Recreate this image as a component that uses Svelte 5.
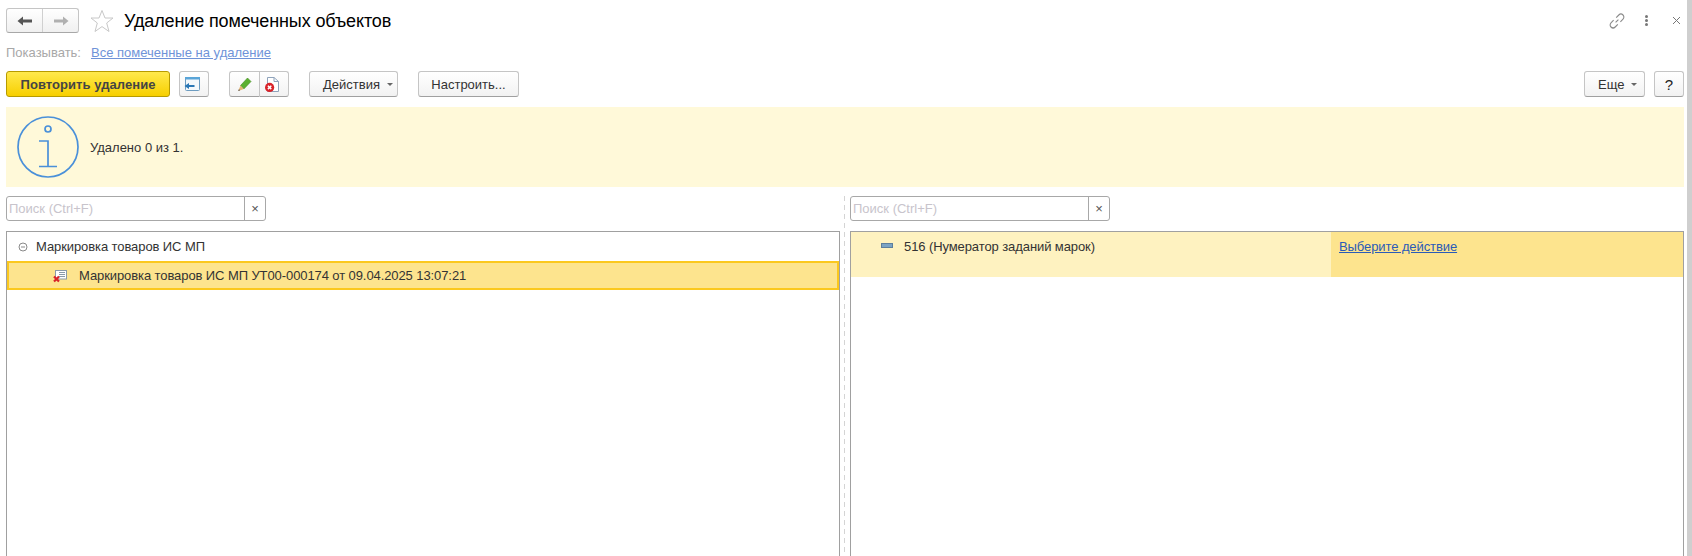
<script lang="ts">
	const searchHint = 'Поиск (Ctrl+F)';
</script>

<div class="page">
	<main class="form">
		<header class="head">
			<div class="nav">
				<button class="nav__btn" aria-label="Назад">
					<svg width="16" height="12" viewBox="0 0 16 12"><path d="M0.5 6 6 1.5V4.5H15V7.5H6V10.5Z" fill="#555" /></svg>
				</button>
				<button class="nav__btn" aria-label="Вперед">
					<svg width="16" height="12" viewBox="0 0 16 12"><path d="M15.5 6 10 1.5V4.5H1V7.5H10V10.5Z" fill="#b0b0b0" /></svg>
				</button>
			</div>
			<svg class="star" width="24" height="24" viewBox="0 0 24 24">
				<path d="M12 1.5 15 9H23L16.7 14 19 22.5 12 17.6 5 22.5 7.3 14 1 9H9Z" fill="#fff" stroke="#c8c8c8" />
			</svg>
			<h1>Удаление помеченных объектов</h1>
			<div class="head__tools">
				<svg width="18" height="18" viewBox="0 0 18 18" fill="none" stroke="#8a8a8a" stroke-width="1.1">
					<path d="M7.6 10.4 10.4 7.6M8.2 5.6 10.8 3a2.9 2.9 0 0 1 4.2 4.2L12.4 9.8M9.8 12.4 7.2 15A2.9 2.9 0 0 1 3 10.8L5.6 8.2" />
				</svg>
				<span class="dots"><i></i><i></i><i></i></span>
				<svg width="9" height="9" viewBox="0 0 9 9" stroke="#777"><path d="M1 1 8 8M8 1 1 8" /></svg>
			</div>
		</header>

		<div class="show">
			<span class="show__label">Показывать:</span>
			<a href="#all" class="show__link">Все помеченные на удаление</a>
		</div>

		<div class="bar">
			<button class="btn btn--main">Повторить удаление</button>
			<button class="btn btn--icon" aria-label="Вернуться">
				<svg width="20" height="18" viewBox="0 0 20 18">
					<rect x="1.5" y="2.5" width="14" height="13" rx="1" fill="#f4f8fb" stroke="#6d9cc0" />
					<path d="M1 2h15v2.5H1z" fill="#5aa5d8" />
					<path d="M0.5 11 5 8V10H10.5V12H5V14Z" fill="#2a77b5" />
				</svg>
			</button>
			<div class="group">
				<button class="btn btn--icon" aria-label="Изменить">
					<svg width="18" height="18" viewBox="0 0 18 18">
						<path d="M4.5 10.5 11.5 3 15 6.5 7.8 14Z" fill="#5cb030" stroke="#3f8a1f" stroke-width=".6" />
						<path d="M4.5 10.5 7.8 14 2.2 16Z" fill="#e5b676" />
						<path d="M2.9 14.2 4.2 15.3 2.2 16Z" fill="#444" />
					</svg>
				</button>
				<button class="btn btn--icon" aria-label="Удалить">
					<svg width="18" height="18" viewBox="0 0 18 18">
						<path d="M2.5 2.5H9L13.5 6.5V16.5H2.5Z" fill="#fff" stroke="#8fa3bb" />
						<path d="M9 2.5V6.5H13.5" fill="none" stroke="#8fa3bb" />
						<circle cx="4.6" cy="12.4" r="4.6" fill="#d8232a" />
						<path d="M2.9 10.7 6.3 14.1M6.3 10.7 2.9 14.1" stroke="#fff" stroke-width="1.5" />
					</svg>
				</button>
			</div>
			<button class="btn btn--actions">Действия<span class="caret"></span></button>
			<button class="btn btn--setup">Настроить...</button>
			<div class="bar__end">
				<button class="btn btn--more">Еще<span class="caret"></span></button>
				<button class="btn btn--help">?</button>
			</div>
		</div>

		<section class="info">
			<svg width="64" height="64" viewBox="0 0 64 64" fill="none" stroke="#4a90d9" stroke-width="1.7">
				<circle cx="32" cy="32" r="30" />
				<circle cx="32" cy="14" r="3" />
				<path d="M23 26H32V51.5M23 51.5H41" />
			</svg>
			<span>Удалено 0 из 1.</span>
		</section>

		<div class="split">
			<section class="pane">
				<div class="search">
					<span class="search__hint">{searchHint}</span>
					<span class="search__clear">×</span>
				</div>
				<div class="table">
					<div class="tree-group">
						<svg width="10" height="10" viewBox="0 0 10 10" fill="none" stroke="#8a8a8a">
							<circle cx="5" cy="5" r="4" /><path d="M3 5H7" />
						</svg>
						<span>Маркировка товаров ИС МП</span>
					</div>
					<div class="tree-row">
						<svg width="15" height="15" viewBox="0 0 15 15">
							<rect x="2.5" y="2.5" width="11" height="8.5" fill="#fff" stroke="#8a9aa8" />
							<path d="M6 4.5H12M6 6.5H12M6 8.5H12" stroke="#8a9aa8" />
							<path d="M1 8.5 6 13.5M6 8.5 1 13.5" stroke="#d8232a" stroke-width="2.2" />
						</svg>
						<span>Маркировка товаров ИС МП УТ00-000174 от 09.04.2025 13:07:21</span>
					</div>
				</div>
			</section>
			<div class="splitter"></div>
			<section class="pane">
				<div class="search">
					<span class="search__hint">{searchHint}</span>
					<span class="search__clear">×</span>
				</div>
				<div class="table">
					<div class="ref-row">
						<div class="ref-row__name">
							<span class="ref-mark"></span>
							<span>516 (Нумератор заданий марок)</span>
						</div>
						<div class="ref-row__action"><a href="#pick">Выберите действие</a></div>
					</div>
				</div>
			</section>
		</div>
	</main>
	<div class="scroll"></div>
</div>

<style>
	:global(body) {
		margin: 0;
		background: #fff;
		overflow: hidden;
	}

	.page {
		display: flex;
		height: 556px;
		overflow: hidden;
		font-family: 'Liberation Sans', Arial, sans-serif;
		font-size: 13px;
		color: #333;
	}

	.form {
		flex: 1;
		display: flex;
		flex-direction: column;
		min-width: 0;
		padding: 8px 3px 0 6px;
	}

	.scroll {
		width: 5px;
		background: #cfcfcf;
	}

	button {
		font: inherit;
		padding: 0;
		cursor: pointer;
	}

	.head {
		display: flex;
		align-items: center;
		height: 25px;
	}

	.nav {
		display: flex;
		width: 73px;
		height: 25px;
		box-sizing: border-box;
		border: 1px solid #c5c5c5;
		border-bottom-color: #a8a8a8;
		border-radius: 3px;
		background: linear-gradient(#fff, #f0f0f0);
	}

	.nav__btn {
		flex: 1;
		display: flex;
		align-items: center;
		justify-content: center;
		border: 0;
		background: none;
	}

	.nav__btn + .nav__btn {
		border-left: 1px solid #d0d0d0;
	}

	.star {
		margin: 0 10px 0 11px;
	}

	h1 {
		margin: 2px 0 0;
		font-size: 18px;
		font-weight: 400;
		letter-spacing: -0.12px;
		color: #000;
	}

	.head__tools {
		display: flex;
		align-items: center;
		margin-left: auto;
		margin-right: 3px;
	}

	.dots {
		display: flex;
		flex-direction: column;
		gap: 1px;
		margin: 0 24px 0 19px;
	}

	.dots i {
		width: 3px;
		height: 3px;
		border-radius: 50%;
		background: #777;
	}

	.show {
		display: flex;
		gap: 10px;
		height: 16px;
		margin-top: 12px;
		line-height: 16px;
	}

	.show__label {
		color: #a8a8a8;
	}

	.show__link {
		color: #6f93d8;
	}

	.bar {
		display: flex;
		align-items: stretch;
		height: 26px;
		margin-top: 10px;
	}

	.btn {
		box-sizing: border-box;
		display: flex;
		align-items: center;
		justify-content: center;
		color: #333;
		border: 1px solid #c5c5c5;
		border-bottom-color: #a0a0a0;
		border-radius: 3px;
		background: linear-gradient(#fff, #f2f2f2);
	}

	.btn--main {
		width: 164px;
		font-weight: 700;
		letter-spacing: 0.06px;
		color: #444;
		border-color: #b79b00;
		background: linear-gradient(#ffe94d, #f7cf00);
	}

	.btn--icon {
		width: 30px;
	}

	.bar > .btn--icon {
		margin-left: 9px;
	}

	.group {
		display: flex;
		margin-left: 20px;
	}

	.group .btn:first-child {
		border-right: 0;
		border-radius: 3px 0 0 3px;
	}

	.group .btn:last-child {
		border-radius: 0 3px 3px 0;
	}

	.btn--actions {
		width: 89px;
		margin-left: 20px;
		padding-left: 13px;
		justify-content: flex-start;
	}

	.btn--setup {
		width: 101px;
		margin-left: 20px;
	}

	.bar__end {
		display: flex;
		gap: 9px;
		margin-left: auto;
	}

	.btn--more {
		width: 61px;
		padding-left: 13px;
		justify-content: flex-start;
	}

	.btn--help {
		width: 30px;
		font-size: 15px;
		color: #222;
	}

	.caret {
		width: 0;
		height: 0;
		margin-left: 7px;
		border: 3px solid transparent;
		border-top-color: #666;
		border-bottom: 0;
	}

	.info {
		display: flex;
		align-items: center;
		gap: 10px;
		height: 80px;
		margin-top: 10px;
		padding-left: 10px;
		box-sizing: border-box;
		background: #fff9d9;
		flex: none;
	}

	.split {
		flex: 1;
		display: flex;
		min-height: 0;
		margin-top: 9px;
	}

	.pane {
		flex: 1;
		min-width: 0;
		display: flex;
		flex-direction: column;
	}

	.splitter {
		width: 1px;
		margin: 0 5px 0 4px;
		background: repeating-linear-gradient(#d4d4d4 0 5px, transparent 5px 9px);
	}

	.search {
		display: flex;
		justify-content: space-between;
		box-sizing: border-box;
		width: 260px;
		height: 25px;
		border: 1px solid #a8a8a8;
		border-radius: 3px;
		line-height: 23px;
	}

	.search__hint {
		padding-left: 2px;
		color: #c8c4cc;
	}

	.search__clear {
		width: 20px;
		border-left: 1px solid #a8a8a8;
		text-align: center;
		color: #555;
	}

	.table {
		flex: 1;
		margin-top: 10px;
		border: 1px solid #a0a0a0;
		border-bottom: 0;
		letter-spacing: -0.09px;
	}

	.tree-group {
		display: flex;
		align-items: center;
		gap: 8px;
		height: 29px;
		padding-left: 11px;
	}

	.tree-row {
		display: flex;
		align-items: center;
		gap: 11px;
		box-sizing: border-box;
		height: 29px;
		padding-left: 44px;
		background: #fde48e;
		border: 2px solid #fbc81e;
	}

	.ref-row {
		display: flex;
		height: 45px;
	}

	.ref-row__name {
		display: flex;
		align-items: flex-start;
		gap: 11px;
		width: 480px;
		padding: 7px 0 0 30px;
		box-sizing: border-box;
		line-height: 16px;
		background: #fef2c0;
	}

	.ref-mark {
		width: 10px;
		height: 3px;
		margin-top: 4px;
		background: #7ba3c4;
		border: 1px solid #5d7f9c;
	}

	.ref-row__action {
		flex: 1;
		padding: 7px 0 0 8px;
		line-height: 16px;
		background: #fde48e;
	}

	.ref-row__action a {
		color: #2a5bb8;
	}
</style>
